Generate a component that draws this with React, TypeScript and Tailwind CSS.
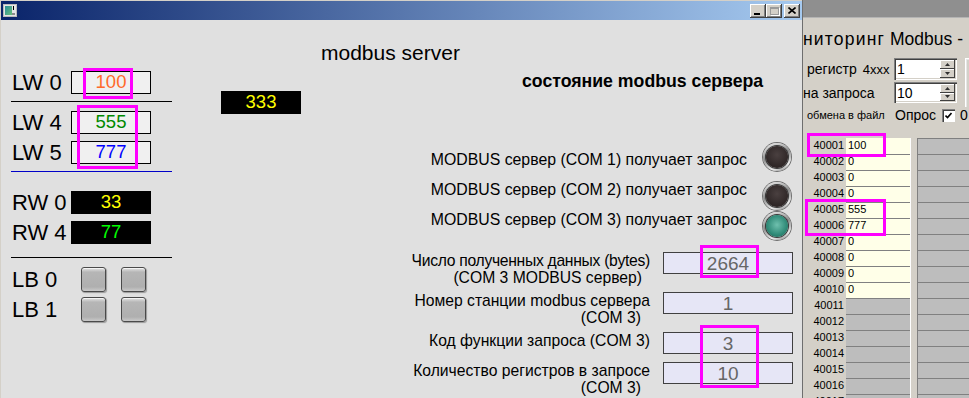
import React from 'react';

const regValues = ['100', '0', '0', '0', '555', '777', '0', '0', '0', '0'];

function Mark({ className }: { className: string }) {
  return <div className={`pointer-events-none absolute border-[3px] border-[#ff00ff] ${className}`} />;
}

function TitleButton({ kind }: { kind: 'min' | 'max' | 'close' }) {
  return (
    <div className="flex h-[14px] w-[16px] items-center justify-center bg-[#d4d0c8] shadow-[inset_-1px_-1px_#404040,inset_1px_1px_#ffffff,inset_-2px_-2px_#808080]">
      {kind === 'min' && <div className="ml-[-2px] mt-[6px] h-[2px] w-[6px] bg-black" />}
      {kind === 'max' && <div className="h-[8px] w-[9px] border border-t-2 border-[#9a9a9a] shadow-[1px_1px_#ffffff]" />}
      {kind === 'close' && (
        <svg width="8" height="7" viewBox="0 0 8 7">
          <path d="M0.5 0.5L7.5 6.5M7.5 0.5L0.5 6.5" stroke="#000" strokeWidth="1.6" />
        </svg>
      )}
    </div>
  );
}

function AppIcon() {
  return (
    <svg width="14" height="13" viewBox="0 0 14 13">
      <defs>
        <linearGradient id="ic" x1="0" y1="0" x2="1" y2="1">
          <stop offset="0" stopColor="#2a8f9a" />
          <stop offset="1" stopColor="#6cc07a" />
        </linearGradient>
      </defs>
      <rect x="0.5" y="0.5" width="13" height="12" fill="#e6e6e6" stroke="#bcbcbc" />
      <rect x="2" y="2" width="7" height="9" fill="url(#ic)" />
      <rect x="10" y="2" width="1" height="4" fill="#000" />
      <rect x="9" y="9" width="3" height="2" fill="#8c8c8c" />
    </svg>
  );
}

function WordRow({ label, value, box }: { label: string; value: string; box: string }) {
  return (
    <div className="flex h-[23px] items-center">
      <span className="w-[60px] pl-[1px] text-[22px] leading-none">{label}</span>
      <div className={`flex h-[23px] w-[80px] items-center justify-center text-[18.5px] leading-none ${box}`}>{value}</div>
    </div>
  );
}

function Square({ className = '' }: { className?: string }) {
  return (
    <div
      className={`h-[25px] w-[25px] rounded-[3px] border border-[#4a4a4a] bg-[linear-gradient(#e4e4e4,#b6b6b6_18%,#afafaf_82%,#c9c9c9)] shadow-[inset_0_1px_#f4f4f4,1px_1px_1px_#9a9a9a] ${className}`}
    />
  );
}

function BitRow({ label }: { label: string }) {
  return (
    <div className="flex h-[25px] items-center">
      <span className="w-[70px] pl-[1px] text-[22px] leading-none">{label}</span>
      <Square />
      <Square className="ml-[15px]" />
    </div>
  );
}

function Lamp({ on = false, className = '' }: { on?: boolean; className?: string }) {
  return (
    <div
      className={`h-[28px] w-[28px] rounded-full bg-[linear-gradient(160deg,#f6f6f6,#8a8a8a_45%,#ececec_78%,#5e5e5e)] p-[3px] shadow-[0_0_0_1px_#6e6e6e] ${className}`}
    >
      <div
        className={
          on
            ? 'h-full w-full rounded-full bg-[radial-gradient(circle_at_50%_45%,#6fc0ae,#2f8a77_60%,#1c5a4e)] shadow-[0_0_0_1px_#3a3a3a]'
            : 'h-full w-full rounded-full bg-[radial-gradient(circle_at_50%_40%,#4a4040,#2e2626_70%)] shadow-[0_0_0_1px_#3a3a3a]'
        }
      />
    </div>
  );
}

function DataRow({ lines, value, className = '' }: { lines: [string, string][]; value: string; className?: string }) {
  return (
    <div className={`mr-[9px] flex justify-end gap-[13px] ${className}`}>
      <div className="text-right text-[15.7px] leading-[17px]">
        {lines.map(([text, pad]) => (
          <div key={text} className={pad}>
            {text}
          </div>
        ))}
      </div>
      <div className="flex h-[22px] w-[130px] items-center justify-center border border-[#404040] bg-[#e6e6f6] text-[19px] leading-none text-[#666666]">
        {value}
      </div>
    </div>
  );
}

function LeftWindow() {
  return (
    <div className="flex h-full w-[802px] shrink-0 flex-col border-l border-t border-[#d4d0c8]">
      <div className="flex h-[19px] shrink-0 items-center bg-[linear-gradient(90deg,#0a246a,#a6caf0)] px-[2px]">
        <AppIcon />
        <div className="ml-auto flex items-center">
          <TitleButton kind="min" />
          <TitleButton kind="max" />
          <div className="ml-[2px]">
            <TitleButton kind="close" />
          </div>
        </div>
      </div>

      <div className="flex flex-1 bg-[#e0e0e0]">
        <div className="ml-[10px] flex w-[161px] shrink-0 flex-col pt-[51px]">
          <WordRow label="LW 0" value="100" box="border border-black bg-[#f0f0f0] text-[#ff6a2b]" />
          <div className="mt-[7px] h-[1px] bg-black" />
          <div className="mt-[9px]">
            <WordRow label="LW 4" value="555" box="border border-black bg-[#f0f0f0] text-[#008a00]" />
          </div>
          <div className="mt-[7px]">
            <WordRow label="LW 5" value="777" box="border border-black bg-[#f0f0f0] text-[#0000ff]" />
          </div>
          <div className="mt-[7px] h-[1px] bg-[#0000c8]" />
          <div className="mt-[19px]">
            <WordRow label="RW 0" value="33" box="bg-black text-[#ffff00]" />
          </div>
          <div className="mt-[7px]">
            <WordRow label="RW 4" value="77" box="bg-black text-[#00ff00]" />
          </div>
          <div className="mt-[13px] h-[1px] bg-black" />
          <div className="mt-[9px]">
            <BitRow label="LB 0" />
          </div>
          <div className="mt-[5px]">
            <BitRow label="LB 1" />
          </div>
        </div>

        <div className="ml-[49px] mt-[71px] flex h-[23px] w-[80px] shrink-0 items-center justify-center bg-black text-[18.5px] leading-none text-[#ffff00]">
          333
        </div>

        <div className="flex flex-1 flex-col">
          <div className="mt-[21px] pl-[20px] text-[21px] leading-[24px]">modbus server</div>
          <div className="ml-[221px] mt-[6px] whitespace-nowrap text-[17.7px] font-bold leading-[20px]">состояние modbus сервера</div>

          <div className="mr-[11px] mt-[54px] flex items-start justify-end gap-[16px]">
            <div className="text-right text-[15.85px] leading-[30px]">
              <div>MODBUS сервер (COM 1) получает запрос</div>
              <div>MODBUS сервер (COM 2) получает запрос</div>
              <div>MODBUS сервер (COM 3) получает запрос</div>
            </div>
            <div className="mt-[-2px] flex flex-col">
              <Lamp />
              <Lamp className="mt-[11px]" />
              <Lamp on className="mt-[2px]" />
            </div>
          </div>

          <DataRow
            className="mt-[12px]"
            lines={[
              ['Число полученных данных (bytes)', 'tracking-[-0.3px]'],
              ['(COM 3 MODBUS сервер)', 'pr-[8px]'],
            ]}
            value="2664"
          />
          <DataRow
            className="mt-[6px]"
            lines={[
              ['Номер станции modbus сервера', ''],
              ['(COM 3)', 'pr-[9px]'],
            ]}
            value="1"
          />
          <DataRow className="mt-[6px]" lines={[['Код функции запроса (COM 3)', '']]} value="3" />
          <DataRow
            className="mt-[8px]"
            lines={[
              ['Количество регистров в запросе', ''],
              ['(COM 3)', 'pr-[9px]'],
            ]}
            value="10"
          />
        </div>
      </div>
    </div>
  );
}

function SpinButton({ up }: { up?: boolean }) {
  return (
    <div className="flex flex-1 items-center justify-center bg-[#d4d0c8] shadow-[inset_-1px_-1px_#404040,inset_1px_1px_#ffffff]">
      <svg width="5" height="3" viewBox="0 0 5 3">
        <path d={up ? 'M2.5 0L5 3H0z' : 'M0 0h5L2.5 3z'} fill="#303030" />
      </svg>
    </div>
  );
}

function SpinBox({ value }: { value: string }) {
  return (
    <div className="flex h-full w-[63px] bg-white p-[2px] shadow-[inset_1px_1px_#808080,inset_2px_2px_#404040,inset_-1px_-1px_#ffffff,inset_-2px_-2px_#d4d0c8]">
      <span className="flex-1 self-center pl-[1px] text-[14px] leading-none">{value}</span>
      <div className="flex w-[15px] flex-col">
        <SpinButton up />
        <SpinButton />
      </div>
    </div>
  );
}

function RightWindow() {
  return (
    <div className="flex h-full min-w-0 flex-1 flex-col overflow-hidden border-l border-[#6e6e6e] bg-[#d4d0c8]">
      <div className="h-[18px] shrink-0 border-b border-[#b4b4b4] bg-[#8f8f8f]" />
      <div className="mt-[10px] self-start whitespace-nowrap text-[17.5px] leading-[22px]">
        <span className="tracking-[1.2px]">ниторинг</span> Modbus -
      </div>

      <div className="mt-[8px] flex">
        <div className="flex flex-col">
          <div className="flex h-[22px] items-center">
            <div className="w-[91px] whitespace-nowrap pl-[4px] text-[14px] leading-none">
              регистр<span className="ml-[6px] text-[13px]">4xxx</span>
            </div>
            <SpinBox value="1" />
          </div>
          <div className="mt-[2px] flex h-[21px] items-center">
            <div className="w-[91px] whitespace-nowrap text-[14px] leading-none">на запроса</div>
            <SpinBox value="10" />
          </div>
        </div>
        <div className="ml-[8px] h-[49px] w-[10px] border-l border-t border-white shadow-[inset_1px_1px_#e6e6e6]" />
      </div>

      <div className="mt-[1px] flex h-[15px] items-center whitespace-nowrap">
        <span className="w-[92px] pl-[4px] text-[11px] leading-none">обмена в файл</span>
        <span className="w-[47px] text-[14px] leading-none">Опрос</span>
        <div className="flex h-[13px] w-[13px] items-center justify-center bg-white shadow-[inset_1px_1px_#808080,inset_2px_2px_#404040,inset_-1px_-1px_#ffffff]">
          <svg width="7" height="7" viewBox="0 0 7 7">
            <path d="M0.5 3.5L2.5 5.5L6.5 1" stroke="#000" strokeWidth="1.6" fill="none" />
          </svg>
        </div>
        <span className="ml-[5px] text-[14px] leading-none">0</span>
      </div>

      <div className="mt-[16px] flex h-[1px] shrink-0">
        <div className="w-[43px]" />
        <div className="w-[64px] bg-[#ffffe8]" />
        <div className="w-[1px] bg-white" />
        <div className="w-[6px]" />
        <div className="flex-1 bg-[#808080]" />
      </div>
      {Array.from({ length: 17 }, (_, i) => (
        <div key={i} className="flex h-[16px] shrink-0">
          <div className="w-[43px] pr-[2px] text-right text-[11px] leading-[13px]">{40001 + i}</div>
          <div
            className={`w-[64px] border-b border-[#808080] pl-[2px] text-[11px] leading-[13px] ${
              i < 10 ? 'bg-[#ffffe8]' : 'bg-[#bdbdbd]'
            }`}
          >
            {regValues[i] ?? ''}
          </div>
          <div className="w-[1px] bg-white" />
          <div className="w-[6px]" />
          <div className="flex-1 border-b border-l border-[#808080] bg-[#bdbdbd]" />
        </div>
      ))}
    </div>
  );
}

export default function App() {
  return (
    <div className="relative flex h-[398px] w-[969px] overflow-hidden bg-[#e0e0e0] font-['Liberation_Sans',Arial,sans-serif] text-black">
      <LeftWindow />
      <RightWindow />

      <Mark className="left-[83px] top-[68px] h-[31px] w-[50px]" />
      <Mark className="left-[77px] top-[105px] h-[64px] w-[61px]" />
      <Mark className="left-[700px] top-[245px] h-[33px] w-[59px]" />
      <Mark className="left-[700px] top-[325px] h-[63px] w-[59px]" />
      <Mark className="left-[807px] top-[133px] h-[24px] w-[79px]" />
      <Mark className="left-[805px] top-[199px] h-[37px] w-[81px]" />
    </div>
  );
}
